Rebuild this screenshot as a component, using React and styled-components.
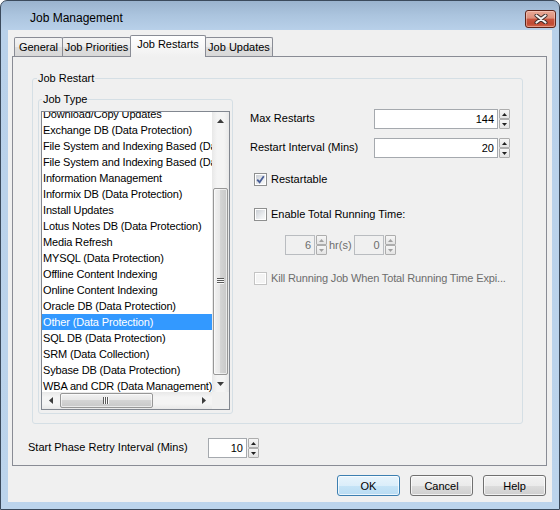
import React from "react";
import styled, { createGlobalStyle } from "styled-components";

const GlobalStyle = createGlobalStyle`
  html, body {
    margin: 0;
    padding: 0;
    background: #ffffff;
  }
  body {
    font-family: "Liberation Sans", Arial, sans-serif;
    font-size: 11px;
    color: #000;
  }
  * {
    box-sizing: border-box;
  }
`;

const jobTypes = [
  "Download/Copy Updates",
  "Exchange DB (Data Protection)",
  "File System and Indexing Based (Data Protection)",
  "File System and Indexing Based (Data Archiving)",
  "Information Management",
  "Informix DB (Data Protection)",
  "Install Updates",
  "Lotus Notes DB (Data Protection)",
  "Media Refresh",
  "MYSQL (Data Protection)",
  "Offline Content Indexing",
  "Online Content Indexing",
  "Oracle DB (Data Protection)",
  "Other (Data Protection)",
  "SQL DB (Data Protection)",
  "SRM (Data Collection)",
  "Sybase DB (Data Protection)",
  "WBA and CDR (Data Management)",
];

const tabs = ["General", "Job Priorities", "Job Restarts", "Job Updates"];
const tabWidths = [49, 69, 76, 68];

const Window = styled.div`
  width: 560px;
  height: 510px;
  border: 1px solid #3b4a5c;
  border-radius: 7px 7px 0 0;
  background: linear-gradient(#9ab3ce 0, #abc4de 14px, #b9d1ea 30px, #bcd4ec 100%);
  display: flex;
  flex-direction: column;
  padding: 0 7px 7px;
`;

const TitleBar = styled.div`
  height: 29px;
  display: flex;
  align-items: flex-start;
`;

const TitleText = styled.div`
  margin: 10px 0 0 22px;
  font-size: 12px;
  line-height: 15px;
  color: #000;
`;

const CloseButton = styled.div`
  margin: 9px -4px 0 auto;
  width: 31px;
  height: 18px;
  border: 1px solid #5e2419;
  border-radius: 3px;
  background: linear-gradient(#e9a996 0%, #dc8f7b 45%, #c8553f 50%, #c04a33 80%, #d5694e 100%);
  box-shadow: inset 0 0 0 1px rgba(255, 220, 210, 0.45);
  display: flex;
  align-items: center;
  justify-content: center;
`;

const Client = styled.div`
  flex: 1;
  background: #f0f0f0;
  display: flex;
  flex-direction: column;
  padding: 5px 0 0 4px;
`;

const TabStrip = styled.div`
  display: flex;
  align-items: flex-end;
  height: 22px;
  padding-left: 2px;
  margin-bottom: -1px;
  position: relative;
  z-index: 1;
`;

const Tab = styled.div`
  width: ${(p) => p.$w}px;
  height: ${(p) => (p.$active ? 22 : 19)}px;
  margin-bottom: ${(p) => (p.$active ? 0 : 1)}px;
  padding-top: ${(p) => (p.$active ? 2 : 3)}px;
  border: 1px solid #898c95;
  border-bottom: none;
  border-radius: 2px 2px 0 0;
  background: ${(p) =>
    p.$active
      ? "linear-gradient(#ffffff, #f0f0f0)"
      : "linear-gradient(#f3f3f3, #ebebeb 50%, #dedede 50%, #d8d8d8)"};
  margin-left: ${(p) => (p.$first ? 0 : -1)}px;
  text-align: center;
  line-height: 13px;
  white-space: nowrap;
`;

const Panel = styled.div`
  width: 535px;
  height: 410px;
  border: 1px solid #898c95;
  background: #f0f0f0;
  display: flex;
  flex-direction: column;
`;

const Group = styled.fieldset`
  margin: ${(p) => p.$margin || 0};
  padding: 0;
  border: 1px solid #d5dfe5;
  border-radius: 3px;
  min-width: 0;
  width: ${(p) => (p.$w ? `${p.$w}px` : "auto")};
  flex-shrink: 0;
`;

const GroupLegend = styled.legend`
  margin-left: ${(p) => p.$indent}px;
  padding: 0 1px;
  line-height: 13px;
  font-size: 11px;
`;

const RestartBody = styled.div`
  display: flex;
  padding: 8px 0 9px 5px;
`;

const ListBox = styled.div`
  margin: 5px 2px 3px 2px;
  width: 189px;
  height: 299px;
  border: 1px solid #828790;
  background: #fff;
  display: grid;
  grid-template-columns: 1fr 17px;
  grid-template-rows: 1fr 17px;
`;

const ListItems = styled.div`
  overflow: hidden;
`;

const ItemsInner = styled.div`
  margin-top: -6px;
`;

const ListItem = styled.div`
  height: 16px;
  line-height: 16px;
  padding-left: 1px;
  letter-spacing: -0.15px;
  white-space: nowrap;
  overflow: hidden;
  background: ${(p) => (p.$selected ? "#3399ff" : "transparent")};
  color: ${(p) => (p.$selected ? "#fff" : "#000")};
`;

const VScroll = styled.div`
  display: flex;
  flex-direction: column;
  background: linear-gradient(to right, #e8e8e8, #f4f4f4 30%, #f4f4f4 70%, #e8e8e8);
`;

const HScroll = styled.div`
  display: flex;
  background: linear-gradient(#e8e8e8, #f4f4f4 30%, #f4f4f4 70%, #e8e8e8);
`;

const ScrollArrow = styled.div`
  width: 17px;
  height: 17px;
  flex-shrink: 0;
  display: flex;
  align-items: center;
  justify-content: center;
`;

const VTrack = styled.div`
  flex: 1;
  display: flex;
  flex-direction: column;
  justify-content: flex-end;
  align-items: center;
`;

const HTrack = styled.div`
  flex: 1;
  display: flex;
  align-items: center;
`;

const VThumb = styled.div`
  width: 15px;
  height: 187px;
  border: 1px solid #979797;
  border-radius: 2px;
  background: linear-gradient(to right, #f2f2f2, #e6e6e6 50%, #d4d4d4 50%, #c8c8c8);
  box-shadow: inset 0 0 0 1px rgba(255, 255, 255, 0.6);
  display: flex;
  align-items: center;
  justify-content: center;
`;

const HThumb = styled.div`
  margin-left: 1px;
  width: 93px;
  height: 15px;
  border: 1px solid #979797;
  border-radius: 2px;
  background: linear-gradient(#f2f2f2, #e6e6e6 50%, #d4d4d4 50%, #c8c8c8);
  box-shadow: inset 0 0 0 1px rgba(255, 255, 255, 0.6);
  display: flex;
  align-items: center;
  justify-content: center;
`;

const Corner = styled.div`
  background: #f0f0f0;
`;

const RightColumn = styled.div`
  margin-left: 17px;
  padding-top: 16px;
  display: flex;
  flex-direction: column;
`;

const FieldRow = styled.div`
  display: flex;
  align-items: center;
  height: 20px;
  margin-top: ${(p) => p.$top || 0}px;
  padding-left: ${(p) => p.$indent || 0}px;
`;

const FieldLabel = styled.div`
  width: ${(p) => p.$w}px;
  flex-shrink: 0;
  margin-top: -3px;
  white-space: nowrap;
`;

const NumberBox = styled.div`
  width: ${(p) => p.$w}px;
  height: 20px;
  border: 1px solid ${(p) => (p.$disabled ? "#b9bcc0" : "#a5a9ae")};
  background: ${(p) => (p.$disabled ? "#f0f0f0" : "#fff")};
  color: ${(p) => (p.$disabled ? "#6d6d6d" : "#000")};
  font-size: 11px;
  text-align: right;
  padding-right: 3px;
  line-height: 18px;
`;

const SpinButtons = styled.div`
  display: flex;
  flex-direction: column;
  margin-left: 1px;
`;

const SpinButton = styled.div`
  width: 11px;
  height: 10px;
  border: 1px solid #adadad;
  border-radius: 1px;
  background: linear-gradient(#f6f6f6, #e4e4e4);
  display: flex;
  align-items: center;
  justify-content: center;
`;

const CheckRow = styled.div`
  display: flex;
  align-items: center;
  height: 14px;
  margin-top: ${(p) => p.$top}px;
  padding-left: 4px;
`;

const CheckBox = styled.div`
  width: 13px;
  height: 13px;
  flex-shrink: 0;
  border: 1px solid ${(p) => (p.$disabled ? "#c4c4c4" : "#8e8f8f")};
  background: #fff;
  padding: 1px;
  margin-right: 4px;
  display: flex;
`;

const CheckInner = styled.div`
  flex: 1;
  background: ${(p) =>
    p.$disabled ? "#f4f4f4" : "linear-gradient(135deg, #cbcfd5, #eef0f2 70%, #f8f8f8)"};
  display: flex;
  align-items: center;
  justify-content: center;
`;

const CheckLabel = styled.div`
  color: ${(p) => (p.$disabled ? "#6d6d6d" : "#000")};
  letter-spacing: ${(p) => (p.$disabled ? "-0.15px" : "0")};
  white-space: nowrap;
`;

const Unit = styled.div`
  margin: 0 2px 0 2px;
  color: #6d6d6d;
`;

const PhaseRow = styled(FieldRow)`
  margin-top: 14px;
  padding-left: 15px;
`;

const ButtonRow = styled.div`
  display: flex;
  justify-content: flex-end;
  gap: 10px;
  margin: 9px 6px 0 0;
`;

const DialogButton = styled.div`
  width: 63px;
  height: 21px;
  border: 1px solid ${(p) => (p.$default ? "#3c7fb1" : "#707070")};
  border-radius: 3px;
  background: ${(p) =>
    p.$default
      ? "linear-gradient(#e8f4fc, #dbeefa 50%, #c6e4f7 50%, #b9dcf3)"
      : "linear-gradient(#f2f2f2, #ebebeb 50%, #dddddd 50%, #cfcfcf)"};
  box-shadow: inset 0 0 0 1px rgba(255, 255, 255, 0.7);
  display: flex;
  align-items: center;
  justify-content: center;
`;

const Tri = ({ dir, color = "#3c3c3c", size = 7 }) => {
  const h = Math.ceil(size / 2);
  const vert = dir === "up" || dir === "down";
  const w = vert ? size : h;
  const hh = vert ? h : size;
  const pts = {
    up: `0,${h} ${size / 2},0 ${size},${h}`,
    down: `0,0 ${size},0 ${size / 2},${h}`,
    left: `${h},0 ${h},${size} 0,${size / 2}`,
    right: `0,0 ${h},${size / 2} 0,${size}`,
  }[dir];
  return (
    <svg width={w} height={hh} viewBox={`0 0 ${w} ${hh}`}>
      <polygon points={pts} fill={color} />
    </svg>
  );
};

const Grip = ({ vertical }) =>
  vertical ? (
    <svg width="7" height="7" viewBox="0 0 7 7">
      {[0, 2, 4].map((y) => (
        <g key={y}>
          <rect x="0" y={y} width="7" height="1" fill="#5a5a5a" />
          <rect x="0" y={y + 1} width="7" height="1" fill="#fafafa" />
        </g>
      ))}
    </svg>
  ) : (
    <svg width="7" height="7" viewBox="0 0 7 7">
      {[0, 2, 4].map((x) => (
        <g key={x}>
          <rect x={x} y="0" width="1" height="7" fill="#5a5a5a" />
          <rect x={x + 1} y="0" width="1" height="7" fill="#fafafa" />
        </g>
      ))}
    </svg>
  );

const Spinner = ({ value, width, disabled }) => {
  const arrow = disabled ? "#a0a0a0" : "#202020";
  return (
    <>
      <NumberBox $w={width} $disabled={disabled}>
        {value}
      </NumberBox>
      <SpinButtons>
        <SpinButton>
          <Tri dir="up" size={5} color={arrow} />
        </SpinButton>
        <SpinButton>
          <Tri dir="down" size={5} color={arrow} />
        </SpinButton>
      </SpinButtons>
    </>
  );
};

const Check = ({ checked, disabled, top, label }) => (
  <CheckRow $top={top}>
    <CheckBox $disabled={disabled}>
      <CheckInner $disabled={disabled}>
        {checked && (
          <svg width="9" height="9" viewBox="0 0 9 9">
            <path d="M1.2 4.6 L3.6 7.2 L7.8 1.2" fill="none" stroke="#4a5f97" strokeWidth="1.8" />
          </svg>
        )}
      </CheckInner>
    </CheckBox>
    <CheckLabel $disabled={disabled}>{label}</CheckLabel>
  </CheckRow>
);

const App = () => {
  return (
    <>
      <GlobalStyle />
      <Window>
        <TitleBar>
          <TitleText>Job Management</TitleText>
          <CloseButton>
            <svg width="14" height="10" viewBox="0 0 14 10">
              <path d="M2.5 1.5 L11.5 8.5 M11.5 1.5 L2.5 8.5" stroke="#3a2a28" strokeWidth="4" strokeLinecap="round" />
              <path d="M2.5 1.5 L11.5 8.5 M11.5 1.5 L2.5 8.5" stroke="#f4f4f4" strokeWidth="2.2" strokeLinecap="round" />
            </svg>
          </CloseButton>
        </TitleBar>
        <Client>
          <TabStrip>
            {tabs.map((t, i) => (
              <Tab key={t} $w={tabWidths[i]} $active={i === 2} $first={i === 0}>
                {t}
              </Tab>
            ))}
          </TabStrip>
          <Panel>
            <Group $margin="15px 23px 0 19px">
              <GroupLegend $indent={4}>Job Restart</GroupLegend>
              <RestartBody>
                <Group $w={195}>
                  <GroupLegend $indent={3}>Job Type</GroupLegend>
                  <ListBox>
                    <ListItems>
                      <ItemsInner>
                        {jobTypes.map((j) => (
                          <ListItem key={j} $selected={j === "Other (Data Protection)"}>
                            {j}
                          </ListItem>
                        ))}
                      </ItemsInner>
                    </ListItems>
                    <VScroll>
                      <ScrollArrow>
                        <Tri dir="up" />
                      </ScrollArrow>
                      <VTrack>
                        <VThumb>
                          <Grip vertical />
                        </VThumb>
                      </VTrack>
                      <ScrollArrow>
                        <Tri dir="down" />
                      </ScrollArrow>
                    </VScroll>
                    <HScroll>
                      <ScrollArrow>
                        <Tri dir="left" />
                      </ScrollArrow>
                      <HTrack>
                        <HThumb>
                          <Grip />
                        </HThumb>
                      </HTrack>
                      <ScrollArrow>
                        <Tri dir="right" />
                      </ScrollArrow>
                    </HScroll>
                    <Corner />
                  </ListBox>
                </Group>
                <RightColumn>
                  <FieldRow>
                    <FieldLabel $w={124}>Max Restarts</FieldLabel>
                    <Spinner value="144" width={124} />
                  </FieldRow>
                  <FieldRow $top={9}>
                    <FieldLabel $w={124}>Restart Interval (Mins)</FieldLabel>
                    <Spinner value="20" width={124} />
                  </FieldRow>
                  <Check checked top={14} label="Restartable" />
                  <Check top={21} label="Enable Total Running Time:" />
                  <FieldRow $top={14} $indent={35}>
                    <Spinner value="6" width={30} disabled />
                    <Unit>hr(s)</Unit>
                    <Spinner value="0" width={30} disabled />
                  </FieldRow>
                  <Check disabled top={16} label="Kill Running Job When Total Running Time Expi..." />
                </RightColumn>
              </RestartBody>
            </Group>
            <PhaseRow>
              <FieldLabel $w={180}>Start Phase Retry Interval (Mins)</FieldLabel>
              <Spinner value="10" width={39} />
            </PhaseRow>
          </Panel>
          <ButtonRow>
            <DialogButton $default>OK</DialogButton>
            <DialogButton>Cancel</DialogButton>
            <DialogButton>Help</DialogButton>
          </ButtonRow>
        </Client>
      </Window>
    </>
  );
};

export default App;
